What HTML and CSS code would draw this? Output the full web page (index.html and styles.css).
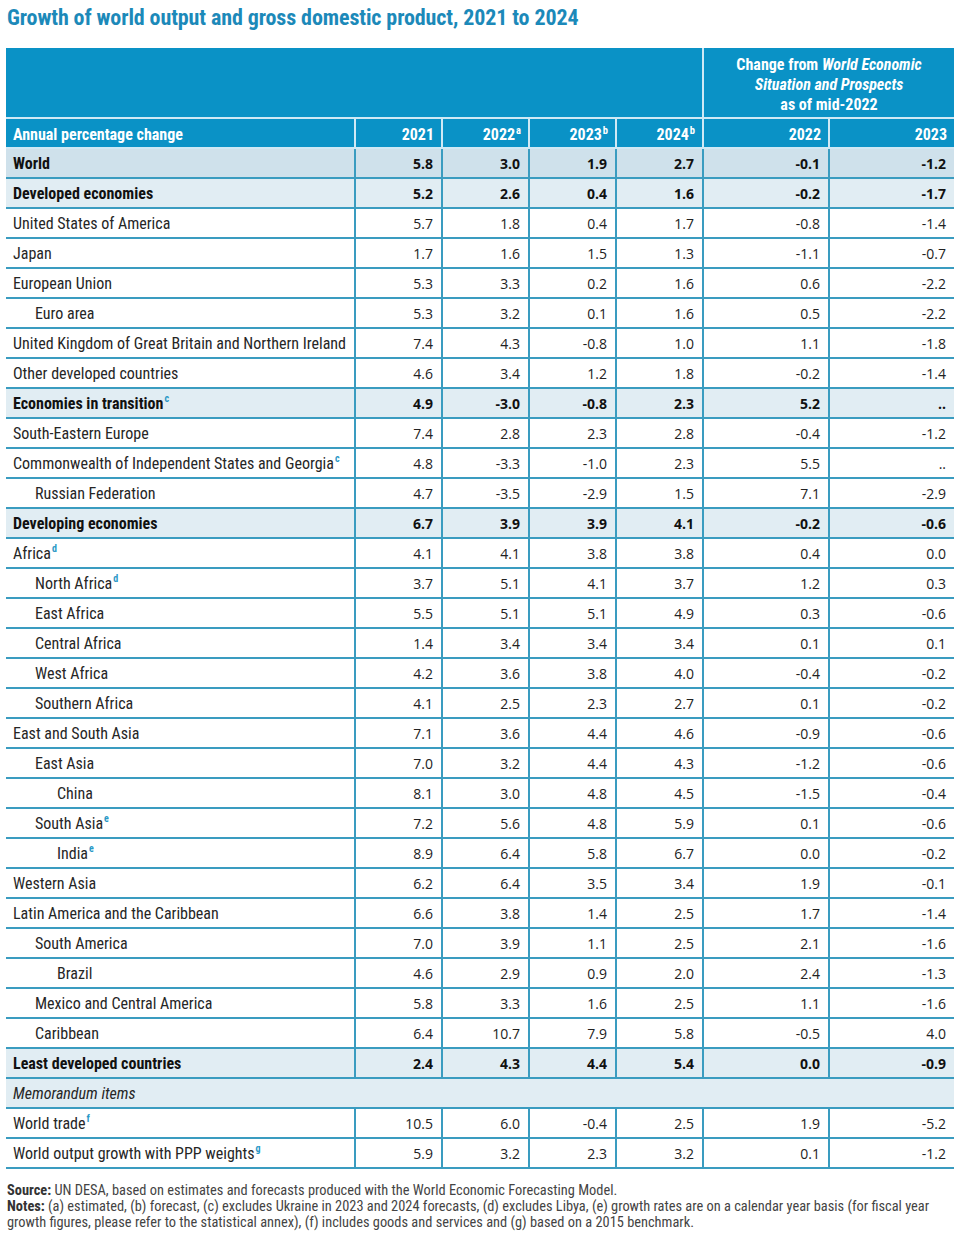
FILE: index.html
```html
<!DOCTYPE html>
<html lang="en">
<head>
<meta charset="utf-8">
<title>Growth of world output</title>
<link rel="stylesheet" href="styles.css">
</head>
<body>
<div class="page">
  <h1 class="title">Growth of world output and gross domestic product, 2021 to 2024</h1>
  <table class="tbl">
    <colgroup>
      <col class="c-label"><col class="c-yr"><col class="c-yr"><col class="c-yr"><col class="c-yr"><col class="c-ch1"><col class="c-ch2">
    </colgroup>
    <thead>
      <tr class="h-top">
        <th colspan="5" class="h-blank"></th>
        <th colspan="2" class="h-change">Change from <i>World Economic<br>Situation and Prospects</i><br>as of mid-2022</th>
      </tr>
      <tr class="h-cols">
        <th class="lbl">Annual percentage change</th>
        <th>2021</th>
        <th>2022<sup>a</sup></th>
        <th>2023<sup>b</sup></th>
        <th>2024<sup>b</sup></th>
        <th>2022</th>
        <th>2023</th>
      </tr>
    </thead>
    <tbody>
      <tr class="bold dark"><td class="lbl">World</td><td>5.8</td><td>3.0</td><td>1.9</td><td>2.7</td><td>-0.1</td><td>-1.2</td></tr>
      <tr class="bold"><td class="lbl">Developed economies</td><td>5.2</td><td>2.6</td><td>0.4</td><td>1.6</td><td>-0.2</td><td>-1.7</td></tr>
      <tr><td class="lbl">United States of America</td><td>5.7</td><td>1.8</td><td>0.4</td><td>1.7</td><td>-0.8</td><td>-1.4</td></tr>
      <tr><td class="lbl">Japan</td><td>1.7</td><td>1.6</td><td>1.5</td><td>1.3</td><td>-1.1</td><td>-0.7</td></tr>
      <tr><td class="lbl">European Union</td><td>5.3</td><td>3.3</td><td>0.2</td><td>1.6</td><td>0.6</td><td>-2.2</td></tr>
      <tr><td class="lbl i1">Euro area</td><td>5.3</td><td>3.2</td><td>0.1</td><td>1.6</td><td>0.5</td><td>-2.2</td></tr>
      <tr><td class="lbl">United Kingdom of Great Britain and Northern Ireland</td><td>7.4</td><td>4.3</td><td>-0.8</td><td>1.0</td><td>1.1</td><td>-1.8</td></tr>
      <tr><td class="lbl">Other developed countries</td><td>4.6</td><td>3.4</td><td>1.2</td><td>1.8</td><td>-0.2</td><td>-1.4</td></tr>
      <tr class="bold"><td class="lbl">Economies in transition<sup class="fn">c</sup></td><td>4.9</td><td>-3.0</td><td>-0.8</td><td>2.3</td><td>5.2</td><td>..</td></tr>
      <tr><td class="lbl">South-Eastern Europe</td><td>7.4</td><td>2.8</td><td>2.3</td><td>2.8</td><td>-0.4</td><td>-1.2</td></tr>
      <tr><td class="lbl">Commonwealth of Independent States and Georgia<sup class="fn">c</sup></td><td>4.8</td><td>-3.3</td><td>-1.0</td><td>2.3</td><td>5.5</td><td>..</td></tr>
      <tr><td class="lbl i1">Russian Federation</td><td>4.7</td><td>-3.5</td><td>-2.9</td><td>1.5</td><td>7.1</td><td>-2.9</td></tr>
      <tr class="bold"><td class="lbl">Developing economies</td><td>6.7</td><td>3.9</td><td>3.9</td><td>4.1</td><td>-0.2</td><td>-0.6</td></tr>
      <tr><td class="lbl">Africa<sup class="fn">d</sup></td><td>4.1</td><td>4.1</td><td>3.8</td><td>3.8</td><td>0.4</td><td>0.0</td></tr>
      <tr><td class="lbl i1">North Africa<sup class="fn">d</sup></td><td>3.7</td><td>5.1</td><td>4.1</td><td>3.7</td><td>1.2</td><td>0.3</td></tr>
      <tr><td class="lbl i1">East Africa</td><td>5.5</td><td>5.1</td><td>5.1</td><td>4.9</td><td>0.3</td><td>-0.6</td></tr>
      <tr><td class="lbl i1">Central Africa</td><td>1.4</td><td>3.4</td><td>3.4</td><td>3.4</td><td>0.1</td><td>0.1</td></tr>
      <tr><td class="lbl i1">West Africa</td><td>4.2</td><td>3.6</td><td>3.8</td><td>4.0</td><td>-0.4</td><td>-0.2</td></tr>
      <tr><td class="lbl i1">Southern Africa</td><td>4.1</td><td>2.5</td><td>2.3</td><td>2.7</td><td>0.1</td><td>-0.2</td></tr>
      <tr><td class="lbl">East and South Asia</td><td>7.1</td><td>3.6</td><td>4.4</td><td>4.6</td><td>-0.9</td><td>-0.6</td></tr>
      <tr><td class="lbl i1">East Asia</td><td>7.0</td><td>3.2</td><td>4.4</td><td>4.3</td><td>-1.2</td><td>-0.6</td></tr>
      <tr><td class="lbl i2">China</td><td>8.1</td><td>3.0</td><td>4.8</td><td>4.5</td><td>-1.5</td><td>-0.4</td></tr>
      <tr><td class="lbl i1">South Asia<sup class="fn">e</sup></td><td>7.2</td><td>5.6</td><td>4.8</td><td>5.9</td><td>0.1</td><td>-0.6</td></tr>
      <tr><td class="lbl i2">India<sup class="fn">e</sup></td><td>8.9</td><td>6.4</td><td>5.8</td><td>6.7</td><td>0.0</td><td>-0.2</td></tr>
      <tr><td class="lbl">Western Asia</td><td>6.2</td><td>6.4</td><td>3.5</td><td>3.4</td><td>1.9</td><td>-0.1</td></tr>
      <tr><td class="lbl">Latin America and the Caribbean</td><td>6.6</td><td>3.8</td><td>1.4</td><td>2.5</td><td>1.7</td><td>-1.4</td></tr>
      <tr><td class="lbl i1">South America</td><td>7.0</td><td>3.9</td><td>1.1</td><td>2.5</td><td>2.1</td><td>-1.6</td></tr>
      <tr><td class="lbl i2">Brazil</td><td>4.6</td><td>2.9</td><td>0.9</td><td>2.0</td><td>2.4</td><td>-1.3</td></tr>
      <tr><td class="lbl i1">Mexico and Central America</td><td>5.8</td><td>3.3</td><td>1.6</td><td>2.5</td><td>1.1</td><td>-1.6</td></tr>
      <tr><td class="lbl i1">Caribbean</td><td>6.4</td><td>10.7</td><td>7.9</td><td>5.8</td><td>-0.5</td><td>4.0</td></tr>
      <tr class="bold"><td class="lbl">Least developed countries</td><td>2.4</td><td>4.3</td><td>4.4</td><td>5.4</td><td>0.0</td><td>-0.9</td></tr>
      <tr class="memo"><td class="lbl" colspan="7">Memorandum items</td></tr>
      <tr><td class="lbl">World trade<sup class="fn">f</sup></td><td>10.5</td><td>6.0</td><td>-0.4</td><td>2.5</td><td>1.9</td><td>-5.2</td></tr>
      <tr><td class="lbl">World output growth with PPP weights<sup class="fn">g</sup></td><td>5.9</td><td>3.2</td><td>2.3</td><td>3.2</td><td>0.1</td><td>-1.2</td></tr>
    </tbody>
  </table>
  <div class="notes">
    <p><b>Source:</b> UN DESA, based on estimates and forecasts produced with the World Economic Forecasting Model.</p>
    <p><b>Notes:</b> (a) estimated, (b) forecast, (c) excludes Ukraine in 2023 and 2024 forecasts, (d) excludes Libya, (e) growth rates are on a calendar year basis (for fiscal year growth figures, please refer to the statistical annex), (f) includes goods and services and (g) based on a 2015 benchmark.</p>
  </div>
</div>
</body>
</html>
```

FILE: styles.css
```css
* { box-sizing: border-box; }
html, body { margin: 0; padding: 0; background: #ffffff; }
.page {
  padding: 5px 9px 0 6px;
  font-family: "Roboto Condensed", "Liberation Sans Narrow", Roboto, sans-serif;
  color: #222;
}
.title {
  margin: 0 0 17px 1px;
  font-size: 22px;
  line-height: 26px;
  font-weight: 700;
  color: #1c89b9;
  letter-spacing: -0.1px;
}
.tbl {
  width: 948px;
  border-collapse: collapse;
  table-layout: fixed;
}
.c-label { width: 349px; }
.c-yr { width: 87px; }
.c-ch1 { width: 126px; }
.c-ch2 { width: 125px; }

thead th {
  background: #0a92c6;
  color: #ffffff;
  font-weight: 700;
  font-size: 16px;
  text-align: right;
  padding: 0 7px;
  border: 2px solid #cfe9f5;
}
.h-top th { height: 70px; border-top: none; }
.h-top .h-blank { border-left: none; }
.h-top .h-change { text-align: center; line-height: 20px; padding-top: 4px; border-right: none; }
.h-cols th { height: 30px; padding-top: 2px; }
.h-cols th:first-child { border-left: none; }
.h-cols th:last-child { border-right: none; }
thead .lbl { text-align: left; }
thead sup { font-size: 10.5px; line-height: 0; vertical-align: 6px; margin-left: 1px; }

tbody td {
  height: 30px;
  padding: 0 8px 0 7px;
  border: 2px solid #3a9cc0;
  text-align: right;
  font-family: "Open Sans", "Noto Sans", sans-serif;
  font-size: 14px;
  color: #222;
}
tbody td:first-child { border-left: none; }
tbody td:last-child { border-right: none; }
tbody td.lbl {
  text-align: left;
  font-family: "Roboto Condensed", "Liberation Sans Narrow", Roboto, sans-serif;
  font-size: 16px;
  padding-top: 1px;
  color: #262626;
}
.i1 { padding-left: 29px !important; }
.i2 { padding-left: 51px !important; }
tr.bold td { background: #e1edf3; font-weight: 700; color: #111; }
tr.bold.dark td { background: #cfe1eb; }
tr.memo td { background: #e1edf3; font-style: italic; }
.fn {
  color: #2a98c6;
  font-size: 10px;
  font-weight: 700;
  font-style: normal;
  line-height: 0;
  vertical-align: 7px;
  margin-left: 1px;
}
.notes {
  margin-top: 14px;
  padding-left: 1px;
  font-size: 14.4px;
  line-height: 16px;
  color: #444;
}
.notes p { margin: 0; }
.notes b { font-weight: 700; color: #333; }
```
